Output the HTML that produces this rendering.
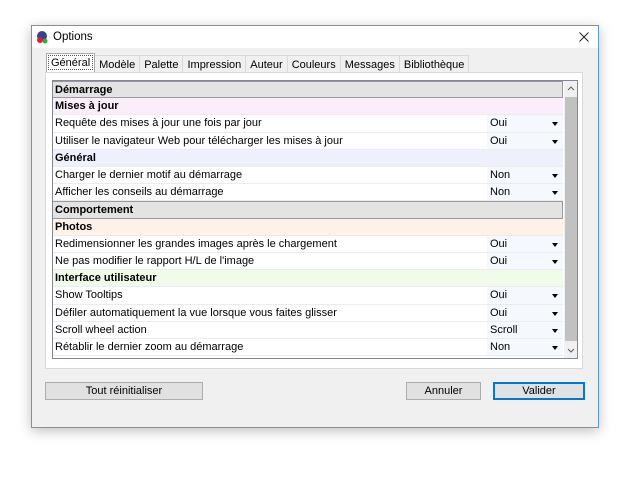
<!DOCTYPE html>
<html><head><meta charset="utf-8"><style>
*{box-sizing:border-box;margin:0;padding:0}
body{width:620px;height:491px;background:#fff;font-family:"Liberation Sans",Arial,sans-serif;font-size:11px;color:#000;position:relative;overflow:hidden}
.win{position:absolute;left:31px;top:25px;width:568px;height:403px;background:#f0f0f0;border:1px solid #5b9bd5;box-shadow:0 3px 12px rgba(0,0,0,.25)}
.title{height:22px;background:#fff;position:relative}
.title span{position:absolute;left:21px;top:5px;font-size:11.5px}
.tabs{position:absolute;left:14px;top:29px;height:17px;display:flex}
.tab{border:1px solid #d9d9d9;border-bottom:none;background:#f0f0f0;padding:3px 4px 0;height:17px;margin-right:-1px;color:#000}
.tab.a{background:#fff;border-color:#adadad;height:19px;margin-top:-2px;padding-top:3px;outline:1px dotted #555;outline-offset:-3px;position:relative;z-index:2}
.panel{position:absolute;left:13px;top:46px;width:538px;height:297px;background:#fff;border:1px solid #d9d9d9}
.grid{position:absolute;left:20px;top:54px;width:526px;height:279px;border:1px solid #828790;background:#fff;overflow:hidden}
.r{position:absolute;left:0;width:510px;height:17.2px;border-bottom:1px solid #ececec;line-height:17px;padding-left:2px}
.r b{font-weight:bold}
.v{position:absolute;left:434px;top:0;width:76px;height:100%;background:#f5f9fd;padding-left:3px}
.v:after{content:"";position:absolute;right:5px;top:7px;border:3px solid transparent;border-top:4px solid #000}
.h{border:1px solid #999;border-left:none}
.sb{position:absolute;left:511px;top:0;width:14px;height:277px;background:#f0f0f0}
.th{position:absolute;left:1px;top:16px;width:12px;height:244px;background:#c1c1c1}
.btn{position:absolute;height:18px;border:1px solid #adadad;background:#e1e1e1;text-align:center;line-height:16px}
</style></head><body>
<div class="win">
 <div class="title">
  <svg style="position:absolute;left:4px;top:4px" width="14" height="14"><circle cx="6" cy="6" r="5" fill="#3a3f8f"/><circle cx="4" cy="10" r="3" fill="#d22"/><circle cx="9" cy="11" r="2.5" fill="#3a3"/></svg>
  <span>Options</span>
  <svg style="position:absolute;right:9px;top:6px" width="10" height="10"><path d="M0.5 0.5L9.5 9.5M9.5 0.5L0.5 9.5" stroke="#222" stroke-width="1"/></svg>
 </div>
 <div class="panel"></div>
 <div class="tabs">
  <div class="tab a">Général</div><div class="tab">Modèle</div><div class="tab">Palette</div><div class="tab">Impression</div><div class="tab">Auteur</div><div class="tab">Couleurs</div><div class="tab">Messages</div><div class="tab">Bibliothèque</div>
 </div>
 <div class="grid">
  <div class="r h" style="top:0;background:#e3e3e3"><b>Démarrage</b></div>
  <div class="r" style="top:17.2px;background:#fbeefb"><b>Mises à jour</b></div>
  <div class="r" style="top:34.4px">Requête des mises à jour une fois par jour<div class="v">Oui</div></div>
  <div class="r" style="top:51.6px">Utiliser le navigateur Web pour télécharger les mises à jour<div class="v">Oui</div></div>
  <div class="r" style="top:68.8px;background:#eef0fb"><b>Général</b></div>
  <div class="r" style="top:86px">Charger le dernier motif au démarrage<div class="v">Non</div></div>
  <div class="r" style="top:103.2px">Afficher les conseils au démarrage<div class="v">Non</div></div>
  <div class="r h" style="top:120.4px;background:#e3e3e3"><b>Comportement</b></div>
  <div class="r" style="top:137.6px;background:#fdf1e8"><b>Photos</b></div>
  <div class="r" style="top:154.8px">Redimensionner les grandes images après le chargement<div class="v">Oui</div></div>
  <div class="r" style="top:172px">Ne pas modifier le rapport H/L de l'image<div class="v">Oui</div></div>
  <div class="r" style="top:189.2px;background:#f1fbea"><b>Interface utilisateur</b></div>
  <div class="r" style="top:206.4px">Show Tooltips<div class="v">Oui</div></div>
  <div class="r" style="top:223.6px">Défiler automatiquement la vue lorsque vous faites glisser<div class="v">Oui</div></div>
  <div class="r" style="top:240.8px">Scroll wheel action<div class="v">Scroll</div></div>
  <div class="r" style="top:258px">Rétablir le dernier zoom au démarrage<div class="v">Non</div></div>
  <div class="sb">
   <svg style="position:absolute;left:3px;top:5px" width="8" height="5"><path d="M1 4L4 1L7 4" fill="none" stroke="#606060"/></svg>
   <div class="th"></div>
   <svg style="position:absolute;left:3px;top:267px" width="8" height="5"><path d="M1 1L4 4L7 1" fill="none" stroke="#606060"/></svg>
  </div>
 </div>
 <div class="btn" style="left:13px;top:356px;width:158px">Tout réinitialiser</div>
 <div class="btn" style="left:374px;top:356px;width:75px">Annuler</div>
 <div class="btn" style="left:461px;top:356px;width:92px;border:2px solid #0078d7;line-height:14px">Valider</div>
</div>
</body></html>
